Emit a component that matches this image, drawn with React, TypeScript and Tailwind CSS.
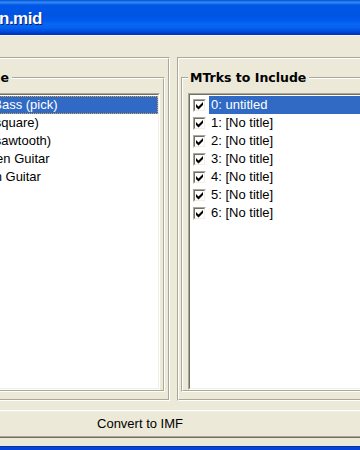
const instruments = [
  'Electric Bass (pick)',
  'Lead 1 (square)',
  'Lead 2 (sawtooth)',
  'Overdriven Guitar',
  'Distortion Guitar',
]

const tracks = [
  '0: untitled',
  '1: [No title]',
  '2: [No title]',
  '3: [No title]',
  '4: [No title]',
  '5: [No title]',
  '6: [No title]',
]

function Check() {
  return (
    <div className="w-[13px] h-[13px] shrink-0 border border-t-[#aca899] border-l-[#aca899] border-r-white border-b-white">
      <div className="w-full h-full bg-white border border-t-[#716f64] border-l-[#716f64] border-r-[#f1efe2] border-b-[#f1efe2]">
        <svg width="9" height="9" viewBox="0 0 9 9" className="block">
          <polygon points="1,3 3.5,5.5 8,1 8,4 3.5,8.5 1,6" fill="#000" />
        </svg>
      </div>
    </div>
  )
}

export default function App() {
  return (
    <div className="w-[360px] h-[450px] overflow-hidden bg-[#ece9d8] font-['Liberation_Sans',Arial,sans-serif] text-[13px] text-black">
      {/* title bar */}
      <div className="h-[35px] bg-[linear-gradient(180deg,#0b5fdf_0px,#0b5fdf_1px,#3b8cf6_2px,#2a7ef2_3px,#0058e6_5px,#0054e3_14px,#0058ea_20px,#0867f5_24px,#0762f2_27px,#0056e6_30px,#0047d6_32px,#0035bf_34px)]">
        <div className="ml-[-1px] pt-[9px] leading-[20px] text-[17px] font-bold tracking-[-0.5px] text-white [text-shadow:1px_1px_0_#0a1e6e]">
          n.mid
        </div>
      </div>
      <div className="h-px bg-[#f6f5ef]" />

      <div className="flex gap-[7px] mt-[21px]">
        {/* left panel */}
        <div className="ml-[-70px] w-[240px] h-[344px] shrink-0 border border-t-[#aca899] border-l-[#aca899] border-r-white border-b-white">
          <div className="h-full border border-t-white border-l-white border-r-[#aca899] border-b-[#aca899] pt-[18px] px-[3px]">
            <div className="relative border border-t-[#aca899] border-l-[#aca899] border-r-white border-b-white">
              <div className="border border-t-white border-l-white border-r-[#aca899] border-b-[#aca899] pt-[14px] pl-[5px] pr-[3px]">
                <div className="h-[297px] border border-t-[#aca899] border-l-[#aca899] border-r-white border-b-white">
                  <div className="h-full bg-white overflow-hidden border border-t-[#716f64] border-l-[#716f64] border-r-[#f1efe2] border-b-[#f1efe2] pt-px">
                    {instruments.map((name, i) => (
                      <div
                        key={name}
                        className={
                          i === 0
                            ? 'h-[18px] flex items-center pl-[3px] whitespace-nowrap bg-[#316ac5] text-white outline-1 outline-dotted outline-[#e0a43e] -outline-offset-1'
                            : 'h-[18px] flex items-center pl-[3px] whitespace-nowrap'
                        }
                      >
                        {name}
                      </div>
                    ))}
                  </div>
                </div>
              </div>
              <div className="absolute top-[-8px] right-[152px] bg-[#ece9d8] pl-[2px] pr-[3px] leading-[16px] whitespace-nowrap font-['DejaVu_Sans',sans-serif] font-bold text-[12.5px]">
                Instruments to Include
              </div>
            </div>
          </div>
        </div>

        {/* right panel */}
        <div className="w-[240px] h-[344px] shrink-0 border border-t-[#aca899] border-l-[#aca899] border-r-white border-b-white">
          <div className="h-full border border-t-white border-l-white border-r-[#aca899] border-b-[#aca899] pt-[18px] pl-[2px]">
            <div className="relative border border-t-[#aca899] border-l-[#aca899] border-r-white border-b-white">
              <div className="border border-t-white border-l-white border-r-[#aca899] border-b-[#aca899] pt-[14px] pl-[5px]">
                <div className="h-[297px] border border-t-[#aca899] border-l-[#aca899] border-r-white border-b-white">
                  <div className="h-full bg-white overflow-hidden border border-t-[#716f64] border-l-[#716f64] border-r-[#f1efe2] border-b-[#f1efe2] pt-px">
                    {tracks.map((t, i) => (
                      <div key={t} className="h-[18px] flex items-center pl-[3px] whitespace-nowrap">
                        <Check />
                        <span
                          className={
                            i === 0
                              ? 'ml-[3px] flex-1 h-full flex items-center px-[2px] bg-[#316ac5] text-white'
                              : 'ml-[3px] px-[2px]'
                          }
                        >
                          {t}
                        </span>
                      </div>
                    ))}
                  </div>
                </div>
              </div>
              <div className="absolute top-[-8px] left-[6px] bg-[#ece9d8] pl-[2px] pr-[3px] leading-[16px] whitespace-nowrap font-['DejaVu_Sans',sans-serif] font-bold text-[12.5px]">
                MTrks to Include
              </div>
            </div>
          </div>
        </div>
      </div>

      {/* convert button */}
      <div className="mt-[9px] ml-[-90px] w-[460px] h-[28px] border border-t-white border-l-white border-r-[#716f64] border-b-[#716f64]">
        <div className="h-full border border-t-[#f1efe2] border-l-[#f1efe2] border-r-[#aca899] border-b-[#aca899] flex items-center justify-center pb-[2px] leading-[15px]">
          Convert to IMF
        </div>
      </div>

      <div className="mt-[8px] h-[5px] bg-[#0842d6] border-t border-[#0a2fa8]" />
    </div>
  )
}
